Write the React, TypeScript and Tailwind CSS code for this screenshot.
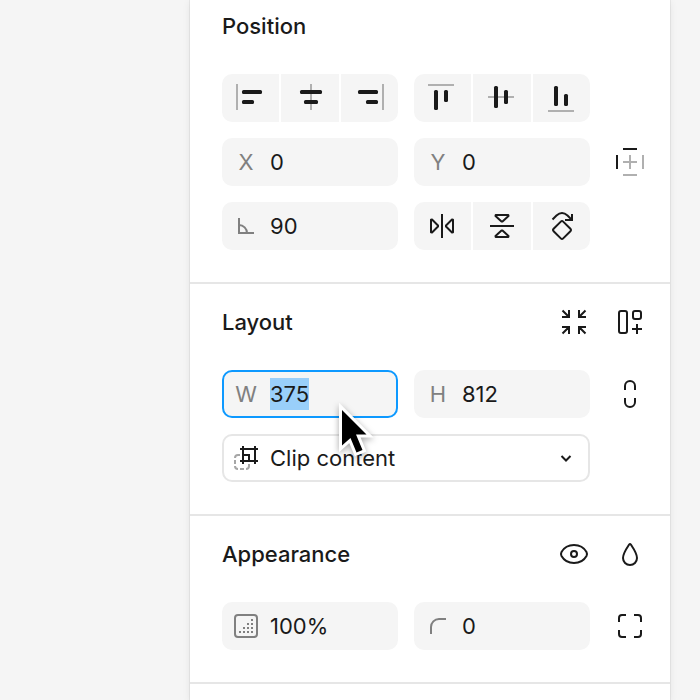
import { useEffect, useRef, type ReactNode } from "react";

const INK = "#1a1a1a";
const MUTED = "#b0b0b0";
const LABEL = "#808080";

function Glyph({ children, color = INK }: { children: ReactNode; color?: string }) {
  return (
    <svg
      width="48"
      height="48"
      viewBox="0 0 48 48"
      fill="none"
      stroke={color}
      strokeWidth="2"
      className="block shrink-0"
      aria-hidden="true"
    >
      {children}
    </svg>
  );
}

type Box = [x: number, y: number, w: number, h: number];

function AlignGlyph({ guide, bars }: { guide: Box; bars: Box[] }) {
  return (
    <Glyph>
      <rect x={guide[0]} y={guide[1]} width={guide[2]} height={guide[3]} fill={MUTED} stroke="none" />
      {bars.map(([x, y, w, h]) => (
        <rect key={`${x}-${y}`} x={x} y={y} width={w} height={h} rx="1.5" fill={INK} stroke="none" />
      ))}
    </Glyph>
  );
}

function Segments({ items }: { items: { label: string; icon: ReactNode }[] }) {
  return (
    <div className="grid h-12 grid-cols-3 gap-0.5 overflow-hidden rounded-[10px]">
      {items.map((item) => (
        <button key={item.label} type="button" aria-label={item.label} className="flex items-center justify-center bg-[#f5f5f5]">
          {item.icon}
        </button>
      ))}
    </div>
  );
}

function IconButton({ label, children }: { label: string; children: ReactNode }) {
  return (
    <button type="button" aria-label={label} className="flex size-12 items-center justify-center">
      {children}
    </button>
  );
}

function Field({ name, mark, value, selected = false }: { name: string; mark: ReactNode; value: string; selected?: boolean }) {
  const ref = useRef<HTMLInputElement>(null);
  useEffect(() => {
    if (selected && ref.current) {
      ref.current.focus({ preventScroll: true });
      ref.current.select();
    }
  }, [selected]);
  return (
    <label className="flex h-12 items-center rounded-[10px] bg-[#f5f5f5] focus-within:inset-ring-2 focus-within:inset-ring-[#0d99ff]">
      <span className="flex w-12 shrink-0 items-center justify-center text-[#808080]">{mark}</span>
      <input
        ref={ref}
        aria-label={name}
        defaultValue={value}
        className="h-8 w-full min-w-0 bg-transparent leading-8 outline-none selection:bg-[#99cffa] selection:text-[#1a1a1a]"
      />
    </label>
  );
}

function Section({ title, actions, children, first = false }: { title: string; actions?: ReactNode; children: ReactNode; first?: boolean }) {
  return (
    <section className={first ? "pr-4 pb-8 pl-8" : "border-t-2 border-[#e6e6e6] pt-3 pr-4 pb-8 pl-8"}>
      <header className="mb-[22px] flex h-[52px] items-center justify-between">
        <h2 className="font-medium">{title}</h2>
        <div className="flex gap-2">{actions}</div>
      </header>
      <div className="grid grid-cols-[1fr_1fr_48px] gap-4">{children}</div>
    </section>
  );
}

const horizontal = [
  { label: "Align left", icon: <AlignGlyph guide={[9, 10, 2, 26]} bars={[[15, 16, 20, 4], [15, 26, 12, 4]]} /> },
  { label: "Align horizontal centers", icon: <AlignGlyph guide={[24, 10, 2, 26]} bars={[[14, 16, 22, 4], [18, 26, 14, 4]]} /> },
  { label: "Align right", icon: <AlignGlyph guide={[37, 10, 2, 26]} bars={[[13, 16, 20, 4], [21, 26, 12, 4]]} /> },
];

const vertical = [
  { label: "Align top", icon: <AlignGlyph guide={[9, 10, 26, 2]} bars={[[15, 16, 4, 20], [25, 16, 4, 12]]} /> },
  { label: "Align vertical centers", icon: <AlignGlyph guide={[10, 22, 26, 2]} bars={[[16, 12, 4, 22], [26, 16, 4, 14]]} /> },
  { label: "Align bottom", icon: <AlignGlyph guide={[11, 36, 26, 2]} bars={[[17, 12, 4, 20], [27, 20, 4, 12]]} /> },
];

const transforms = [
  {
    label: "Flip horizontal",
    icon: (
      <Glyph>
        <path strokeLinejoin="round" d="M23 12v24M12 17.700v12.600l1 .2 6-6v-1l-6-6zM34 17.700v12.600l-1 .2-6-6v-1l6-6z" />
      </Glyph>
    ),
  },
  {
    label: "Flip vertical",
    icon: (
      <Glyph>
        <path strokeLinejoin="round" d="M12 24h24M17.700 13h12.600l.2 1-6 5.500h-1l-6-5.500zM17.700 35h12.600l.2-1-6-5.500h-1l-6 5.500z" />
      </Glyph>
    ),
  },
  {
    label: "Rotate 90 degrees",
    icon: (
      <Glyph>
        <path d="M23.8 19.600q1.200-1.200 2.400 0l7.200 7.200q1.200 1.200 0 2.400l-7.200 7.200q-1.200 1.200-2.400 0l-7.200-7.200q-1.200-1.200 0-2.400zM15.500 17.500l4-4q5.500-5 11 0l4.500 4.500M35 12v6h-7" />
      </Glyph>
    ),
  },
];

export default function App() {
  return (
    <main
      className="relative flex min-h-screen bg-[#f5f5f5] pr-[30px] pl-[190px] text-[22px] leading-8 text-[#1a1a1a]"
      style={{ fontFamily: 'Inter, "Liberation Sans", sans-serif' }}
    >
      <aside className="min-w-0 flex-1 bg-white shadow-[0_0_1px_rgba(0,0,0,0.3),0_2px_8px_rgba(0,0,0,0.08)]">
        <Section title="Position" first>
          <Segments items={horizontal} />
          <Segments items={vertical} />
          <span />
          <Field name="X position" mark="X" value="0" />
          <Field name="Y position" mark="Y" value="0" />
          <IconButton label="Constraints">
            <Glyph>
              <path d="M17 11h14M11 17v14" />
              <path stroke={MUTED} d="M17 24h14M24 17v14M37 17v14M17 37h14" />
            </Glyph>
          </IconButton>
          <Field
            name="Rotation"
            mark={
              <Glyph color={LABEL}>
                <path d="M17 16v15h15M17 23a8 8 0 0 1 8 8" />
              </Glyph>
            }
            value="90"
          />
          <Segments items={transforms} />
        </Section>

        <Section
          title="Layout"
          actions={
            <>
              <IconButton label="Resize to fit">
                <Glyph>
                  <path d="M19 12v7h-7M12.5 12.5L19 19M29 12v7h7M35.5 12.5L29 19M19 36v-7h-7M12.5 35.5L19 29M29 36v-7h7M35.5 35.5L29 29" />
                </Glyph>
              </IconButton>
              <IconButton label="Use auto layout">
                <Glyph>
                  <rect x="13" y="13" width="8" height="22" rx="2" />
                  <rect x="27" y="13" width="8" height="8" rx="2" />
                  <path d="M26 31h10M31 26v10" />
                </Glyph>
              </IconButton>
            </>
          }
        >
          <Field name="Width" mark="W" value="375" selected />
          <Field name="Height" mark="H" value="812" />
          <IconButton label="Lock aspect ratio">
            <Glyph>
              <path d="M19 20v-4a5 5 0 0 1 10 0v4M19 28v4a5 5 0 0 0 10 0v-4" />
            </Glyph>
          </IconButton>
          <div className="col-span-2 grid h-12 items-center">
            <select
              aria-label="Overflow"
              className="col-start-1 row-start-1 h-12 w-full appearance-none rounded-[10px] border-2 border-[#e6e6e6] bg-white pr-12 pl-[46px]"
            >
              <option>Clip content</option>
            </select>
            <span className="pointer-events-none col-start-1 row-start-1 flex justify-between">
              <Glyph>
                <path stroke="#a6a6a6" d="M18 21h-2q-3 0-3 3M13 26v4M13 32q0 3 3 3M18 35h4M24 35q3 0 3-3v-2" />
                <path d="M21 12v18M33 12v18M18 15h18M18 27h18M21 21h6v6" />
              </Glyph>
              <Glyph>
                <path d="M19.5 22l4.5 4.5 4.5-4.5" />
              </Glyph>
            </span>
          </div>
        </Section>

        <Section
          title="Appearance"
          actions={
            <>
              <IconButton label="Toggle visibility">
                <Glyph>
                  <path d="M24 15c6.500 0 10.500 3.500 12.500 7q1 2 0 4c-2 3.500-6 7-12.500 7s-10.500-3.500-12.500-7q-1-2 0-4c2-3.500 6-7 12.500-7z" />
                  <circle cx="24" cy="24" r="3" />
                </Glyph>
              </IconButton>
              <IconButton label="Blend mode">
                <Glyph>
                  <path d="M23.200 14.500q.8-1.200 1.600 0c3 4.500 6.200 9 6.200 13.500a7 7 0 0 1-14 0c0-4.500 3.200-9 6.200-13.500z" />
                </Glyph>
              </IconButton>
            </>
          }
        >
          <Field
            name="Opacity"
            mark={
              <Glyph color={LABEL}>
                <rect x="13" y="13" width="22" height="22" rx="3" />
                <path d="M17 30h14M21 26h10M25 22h6M29 18h2" strokeDasharray="2 2" />
              </Glyph>
            }
            value="100%"
          />
          <Field
            name="Corner radius"
            mark={
              <Glyph color={LABEL}>
                <path d="M17 32v-7a8 8 0 0 1 8-8h7" />
              </Glyph>
            }
            value="0"
          />
          <IconButton label="Individual corners">
            <Glyph>
              <path d="M13 20v-4q0-3 3-3h4M28 13h4q3 0 3 3v4M35 28v4q0 3-3 3h-4M20 35h-4q-3 0-3-3v-4" />
            </Glyph>
          </IconButton>
        </Section>

        <div className="border-t-2 border-[#e6e6e6]" />
      </aside>

      <svg
        width="60"
        height="76"
        viewBox="0 0 60 76"
        className="pointer-events-none absolute top-[392px] left-[330px] drop-shadow-[0_2px_3px_rgba(0,0,0,0.35)]"
        aria-hidden="true"
      >
        <path d="M12 18v35.500l8.500-7.500 6 14.500 6-2.500-6.500-15.500h10.500z" fill="#000" stroke="#fff" strokeWidth="6" style={{ paintOrder: "stroke" }} />
      </svg>
    </main>
  );
}
